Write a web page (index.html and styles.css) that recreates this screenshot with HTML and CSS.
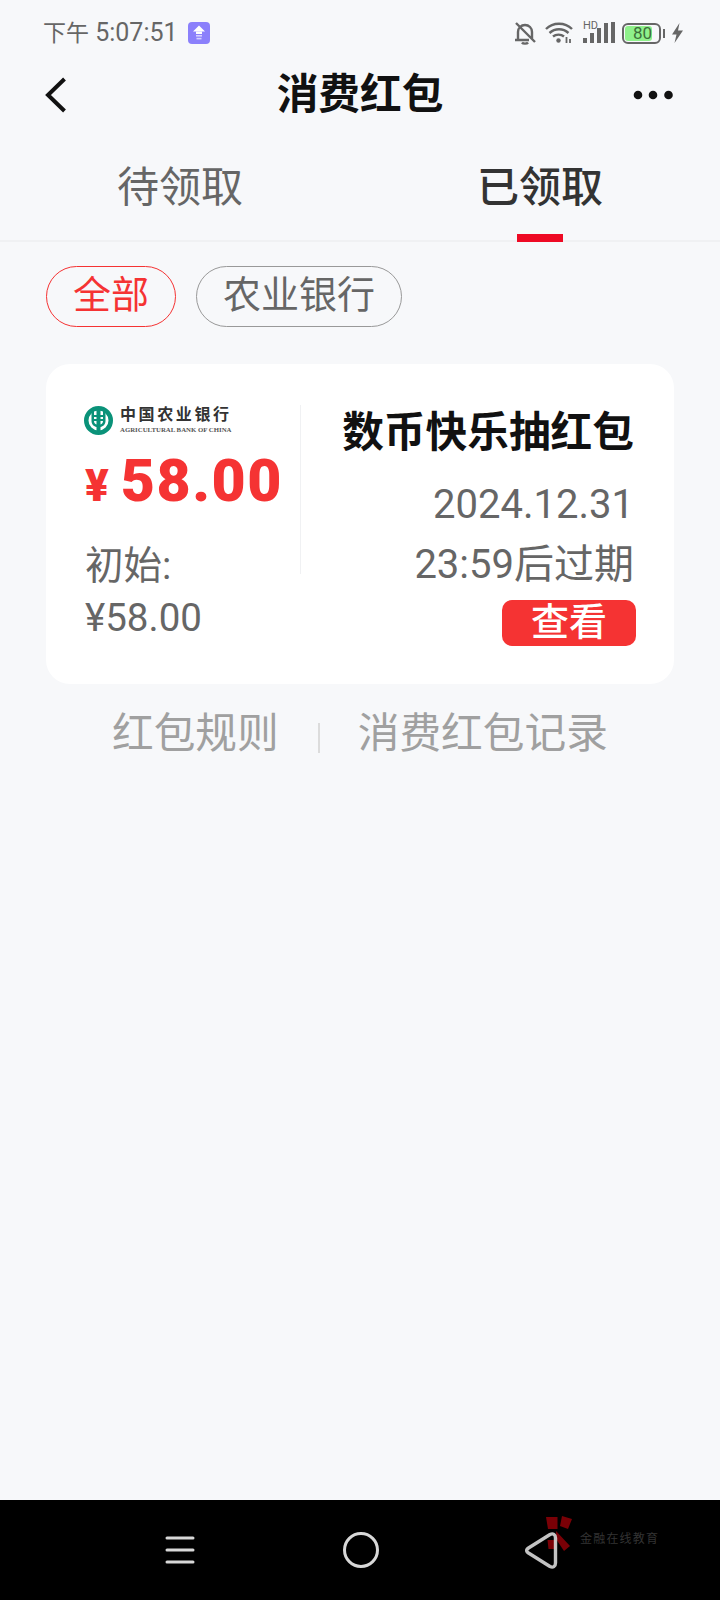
FILE: index.html
```html
<!DOCTYPE html>
<html lang="zh-CN">
<head>
<meta charset="utf-8">
<title>消费红包</title>
<link rel="stylesheet" href="styles.css">
</head>
<body>
<section id="wrapper">
  <div class="status">
    <div class="status-left">
      <span class="time"><span class="ampm">下午</span> 5:07:51</span>
      <svg class="upload" width="22" height="22" viewBox="0 0 22 22"><rect width="22" height="22" rx="4" fill="#8b80fb"/><path d="M11 3.500 17 9.500H5Z" fill="#fff"/><rect x="8" y="9.500" width="6" height="2.500" fill="#fff"/><rect x="8" y="13" width="6" height="1.600" fill="#d6d1ff"/><rect x="8.500" y="15.800" width="5" height="1.600" fill="#d6d1ff"/></svg>
    </div>
    <div class="status-right">
      <svg class="ic-bell" width="22" height="24" viewBox="0 0 22 24" fill="none" stroke="#666" stroke-width="2.400"><path d="M4 18V11C4 7 7 4 11 4S18 7 18 11V18M1 19H15M8 21.500C9 23 13 23 14 21.500M2 2 21 21"/></svg>
      <svg class="ic-wifi" width="28" height="22" viewBox="0 0 28 22" fill="none" stroke="#666" stroke-width="2.400"><path d="M1 7C8 0 20 0 27 7M4.500 11C10 6 18 6 23.500 11M8 14.500C11 12 16 12 19 14.500"/><circle cx="13.500" cy="18.500" r="2.200" fill="#666" stroke="none"/><path d="M21.500 15V21M25 17V21" stroke-width="1.800"/></svg>
      <div class="signal">
        <span class="hd">HD</span>
        <svg width="32" height="22" viewBox="0 0 32 22" fill="#666"><rect y="16" width="4" height="5"/><rect x="7" y="11" width="4" height="10"/><rect x="14" y="6" width="4" height="15"/><rect x="21" y="1" width="4" height="20"/><rect x="28" y="0" width="4" height="21"/></svg>
      </div>
      <div class="battery"><span class="battery-fill">80</span></div>
      <span class="battery-tip"></span>
      <svg class="bolt" width="11" height="20" viewBox="0 0 11 20"><path d="M7.500 0 0 11.500H4.500L2.500 20 11 7.500H6Z" fill="#666"/></svg>
    </div>
  </div>

  <header class="topbar">
    <svg width="24" height="36" viewBox="0 0 24 36" fill="none" stroke="#111" stroke-width="4"><path d="M20.500 2 4 18 20.500 34"/></svg>
    <h1>消费红包</h1>
    <svg width="42" height="12" viewBox="0 0 42 12" fill="#111"><circle cx="6" cy="6" r="4.300"/><circle cx="21" cy="6" r="4.300"/><circle cx="36.500" cy="6" r="4.300"/></svg>
  </header>

  <nav class="tabs">
    <a class="tab">待领取</a>
    <a class="tab active">已领取</a>
  </nav>

  <div class="chips">
    <span class="chip selected">全部</span>
    <span class="chip">农业银行</span>
  </div>

  <article class="card">
    <div class="card-left">
      <div class="bank">
        <svg width="29" height="29" viewBox="0 0 29 29" fill="#0a9279"><path d="M14.500 0A14.500 14.500 0 1 0 14.500 29 14.500 14.500 0 1 0 14.500 0ZM14.500 4.500A10 10 0 1 1 14.500 24.500 10 10 0 1 1 14.500 4.500Z"/><path d="M7.500 3V15C7.500 18.500 10 20.500 12.500 21V26H16.500V21C19 20.500 21.500 18.500 21.500 15V3H19V15C19 17 18 18 16.500 18.500V15H19V13H16.500V11H19V9H16.500V2H12.500V9H10V11H12.500V13H10V15H12.500V18.500C11 18 10 17 10 15V3Z"/></svg>
        <div class="bank-name">
          <span class="bank-cn">中国农业银行</span>
          <span class="bank-en">AGRICULTURAL BANK OF CHINA</span>
        </div>
      </div>
      <div class="amount"><span class="yen">¥</span><span class="sum">58.00</span></div>
      <p class="initial">初始:<br>¥58.00</p>
    </div>
    <div class="card-right">
      <h2>数币快乐抽红包</h2>
      <p class="expire">2024.12.31<br>23:59后过期</p>
      <a class="view">查看</a>
    </div>
  </article>

  <div class="links">
    <a>红包规则</a>
    <span class="links-sep"></span>
    <a>消费红包记录</a>
  </div>
</section>

<footer class="navbar">
  <svg width="30" height="28" viewBox="0 0 30 28" fill="none" stroke="#d8d8d8" stroke-width="3" stroke-linecap="round"><path d="M2 2H28M2 14H28M2 26H28"/></svg>
  <svg width="38" height="38" viewBox="0 0 38 38" fill="none" stroke="#d8d8d8" stroke-width="3"><circle cx="19" cy="19" r="16.500"/></svg>
  <div class="watermark">
    <svg width="30" height="38" viewBox="0 0 30 38"><path d="M2 3H13.500V15H4ZM18 2 28 5 24 15 16 12ZM3.500 26H12V35H4.500ZM12 17 26 32 20 37 12 25Z" fill="#7a0006"/></svg>
    <span>金融在线教育</span>
  </div>
  <svg class="back" width="33" height="39" viewBox="0 0 33 39" fill="none" stroke="#d8d8d8" stroke-opacity=".9" stroke-width="3.400" stroke-linejoin="round"><path d="M25 3.500 3.500 17C1 18.800 1 20.200 3.500 22L25 35.500C28 37 30.500 35.500 30.500 32V7C30.500 3.500 28 2 25 3.500Z"/></svg>
</footer>
</body>
</html>
```

FILE: styles.css
```css
body {
  font-family: Roboto, "Noto Sans CJK SC", sans-serif;
  background: #f7f8fa;
  margin: 0;
  padding: 0;
  width: 720px;
  height: 1600px;
  display: flex;
  flex-direction: column;
  overflow: hidden;
}

#wrapper {
  flex: 1;
}

h1, h2, p {
  margin: 0;
}

.status {
  height: 66px;
  display: flex;
  align-items: center;
  justify-content: space-between;
  padding: 0 37px 0 43px;
  color: #666;
}

.status-left {
  display: flex;
  align-items: center;
  gap: 10px;
}

.time {
  font-size: 25px;
  line-height: 30px;
}

.ampm {
  font-size: 23px;
}

.status-right {
  display: flex;
  align-items: center;
}

.ic-wifi {
  margin-left: 9px;
}

.signal {
  position: relative;
  margin-left: 10px;
}

.signal svg {
  display: block;
}

.hd {
  position: absolute;
  left: 0;
  top: -2px;
  font-size: 11px;
  line-height: 11px;
}

.battery {
  width: 33px;
  height: 15px;
  border: 2px solid #666;
  border-radius: 6px;
  padding: 1px;
  margin-left: 7px;
  display: flex;
}

.battery-fill {
  flex: 1;
  margin-right: 6px;
  background: #8ff18b;
  border-radius: 3px;
  font-size: 17px;
  line-height: 15px;
  text-align: right;
  color: #3c6e3a;
}

.battery-tip {
  width: 2px;
  height: 9px;
  background: #666;
  margin-left: 2px;
}

.bolt {
  margin-left: 7px;
}

.topbar {
  height: 58px;
  display: flex;
  align-items: center;
  justify-content: space-between;
  padding: 0 46px 0 44px;
}

h1 {
  font-size: 41.700px;
  line-height: 58px;
  font-weight: 700;
  color: #111;
  margin-left: 20px;
}

.tabs {
  box-sizing: border-box;
  border-bottom: 2px solid #f0f1f3;
  display: flex;
  height: 118px;
}

.tab {
  flex: 1;
  text-align: center;
  font-size: 42px;
  line-height: 60px;
  padding-top: 34px;
  color: #666;
  position: relative;
}

.tab.active {
  color: #333;
  font-weight: 500;
}

.tab.active::after {
  content: "";
  position: absolute;
  left: 50%;
  bottom: -2px;
  width: 46px;
  height: 8px;
  margin-left: -23px;
  background: #ee0a24;
}

.chips {
  display: flex;
  gap: 20px;
  padding: 24px 46px 0;
}

.chip {
  height: 61px;
  box-sizing: border-box;
  padding: 0 26px;
  border: 1px solid #999;
  border-radius: 31px;
  font-size: 38px;
  line-height: 57px;
  color: #666;
}

.chip.selected {
  border-color: #f53333;
  color: #f53333;
}

.card {
  margin: 37px 46px 0;
  height: 320px;
  box-sizing: border-box;
  background: #fff;
  border-radius: 24px;
  display: flex;
  padding: 41px 40px 0 38px;
}

.card-left {
  width: 216px;
}

.bank {
  display: flex;
  align-items: center;
  gap: 7px;
  height: 32px;
  margin-top: -1px;
}

.bank-name {
  display: flex;
  flex-direction: column;
  font-family: "Liberation Serif", "Noto Sans CJK SC", serif;
}

.bank-cn {
  font-size: 16px;
  line-height: 17px;
  font-weight: 700;
  letter-spacing: 2.600px;
  color: #333;
  white-space: nowrap;
}

.bank-en {
  font-size: 6.800px;
  line-height: 9px;
  margin-top: 2px;
  font-weight: 700;
  white-space: nowrap;
  color: #555;
}

.amount {
  display: flex;
  align-items: baseline;
  color: #f53333;
  font-weight: 900;
  height: 70px;
  margin-top: 10px;
  white-space: nowrap;
}

.yen {
  font-size: 44px;
  margin: 0 12px 0 1px;
}

.sum {
  font-size: 59px;
  line-height: 70px;
  letter-spacing: 1.500px;
}

.initial {
  font-size: 38.500px;
  line-height: 52px;
  color: #666;
  margin-top: 24px;
  padding-left: 1px;
}

.card-right {
  flex: 1;
  text-align: right;
  position: relative;
}

.card-right::before {
  content: "";
  position: absolute;
  left: 0;
  top: 0;
  height: 169px;
  width: 1px;
  background: #f0f1f3;
}

h2 {
  font-size: 41.700px;
  line-height: 56px;
  font-weight: 700;
  color: #111;
  white-space: nowrap;
}

.expire {
  font-size: 40px;
  line-height: 60px;
  color: #666;
  margin-top: 14px;
  white-space: nowrap;
}

.view {
  display: block;
  width: 134px;
  height: 46px;
  margin: 5px -2px 0 auto;
  background: #f53333;
  border-radius: 10px;
  color: #fff;
  text-align: center;
  font-size: 38px;
  font-weight: 500;
  line-height: 45px;
}

.links {
  display: flex;
  align-items: center;
  padding: 21px 0 0 112px;
  font-size: 41.700px;
  line-height: 58px;
  color: #a0a0a0;
}

.links-sep {
  width: 2px;
  height: 30px;
  margin: 8px 38px 0 39px;
  background: #dcdcdc;
}

.navbar {
  height: 100px;
  background: #000;
  position: relative;
  display: flex;
  align-items: center;
  flex-shrink: 0;
  padding-left: 165px;
  gap: 147px;
}

.back {
  margin-left: -2px;
  position: relative;
}

.watermark {
  position: absolute;
  left: 544px;
  top: 14px;
  display: flex;
  align-items: flex-end;
  gap: 6px;
}

.watermark span {
  font-size: 12px;
  line-height: 14px;
  letter-spacing: 1.200px;
  color: #333;
  margin-bottom: 6px;
  white-space: nowrap;
}
```
